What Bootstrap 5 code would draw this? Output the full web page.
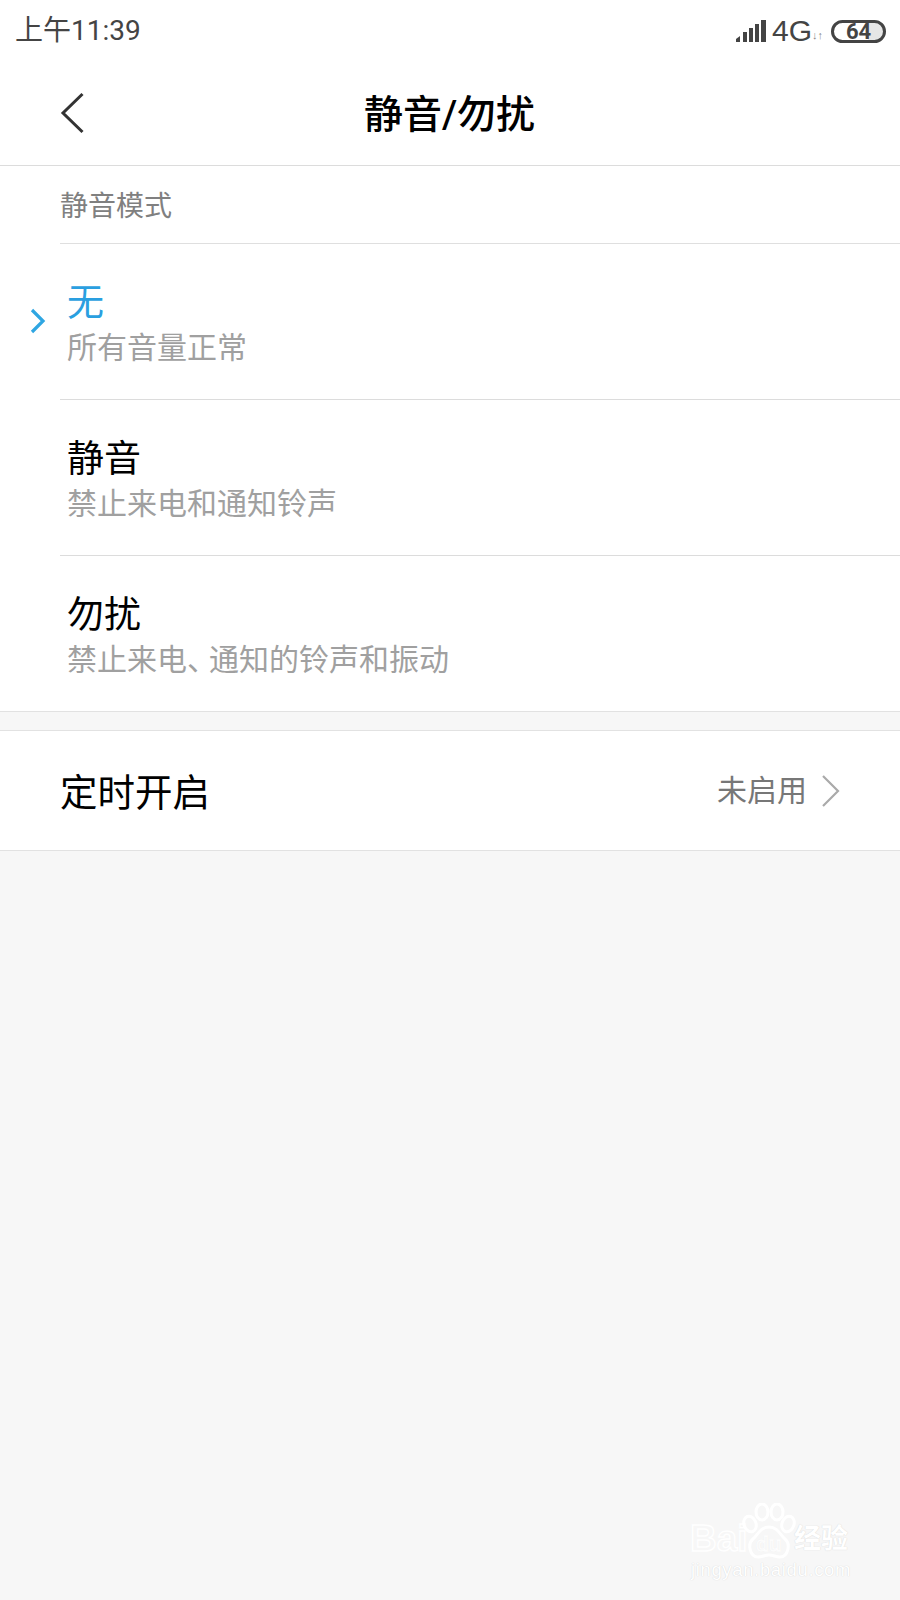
<!DOCTYPE html>
<html lang="zh">
<head>
<meta charset="utf-8">
<title>静音/勿扰</title>
<link href="https://cdn.jsdelivr.net/npm/bootstrap@5.3.0/dist/css/bootstrap.min.css" rel="stylesheet">
<style>
html,body{height:100%}
body{background:#f7f7f7;font-family:"Roboto","Noto Sans CJK SC",sans-serif;color:#000;overflow:hidden}
.screen{height:1600px;width:900px;position:relative}
.hdr{height:166px;background:#fff;border-bottom:1px solid #dcdcdc}
.stat{height:60px;padding:2px 14px 0 15px}
.clock{font-size:28px;line-height:62px;color:#444;letter-spacing:0}
.sig{margin-right:5px}
.net{font-size:30px;line-height:60px;color:#444;font-family:"Liberation Sans",sans-serif}
.arrows{font-size:11px;color:#888;margin:9px 0 0 0;font-family:"Liberation Sans",sans-serif}
.batt{width:55px;height:23px;border:3px solid #444;border-radius:12px;font-size:22px;font-weight:700;line-height:17px;color:#444;text-align:center;background:linear-gradient(90deg,#fff 70%,#e6e6e6 70%);font-family:"Roboto",sans-serif}
.topbar{height:105px;padding-left:60px;position:relative}
.ttl{font-size:39px;font-weight:500;line-height:105px;position:absolute;left:0;right:0;top:3px;padding-right:1px;text-align:center}
.sect{background:#fff;border-bottom:1px solid #e2e2e2}
.lab-row{height:78px;margin-left:60px;border-bottom:1px solid #dfdfdf;font-size:28px;line-height:82px;color:#808080}
.opt{height:156px;margin-left:60px;padding-left:7px;position:relative;border-bottom:1px solid #dcdcdc}
.opt:last-child{border-bottom:0;height:155px}
.opt-t{font-size:37px;line-height:46px;padding-top:37px;box-sizing:content-box}
.opt-s{font-size:30px;line-height:44px;color:#a0a0a0;margin-top:-1px}
.dun{letter-spacing:-8px}
.is-on .opt-t{color:#2a9fe0}
.tick{position:absolute;left:-31px;top:64px}
.timer{margin-top:18px;height:121px;background:#fff;border-top:1px solid #e2e2e2;border-bottom:1px solid #e2e2e2;padding:0 59px 0 60px}
.timer-t{font-size:37.5px;padding-top:6px}
.timer-v{font-size:30px;color:#777;margin-right:14px}
.wm{position:absolute;left:690px;top:1500px;width:165px;height:80px;pointer-events:none}
.wm-a{position:absolute;left:0;top:18px;font:700 37px/42px "Liberation Sans",sans-serif;color:#f7f7f7;-webkit-text-stroke:1.5px #fff;text-shadow:0 0 1px #ddd}
.wm-b{position:absolute;left:104px;top:23px;font-size:27px;line-height:32px;font-weight:700;color:#fff;text-shadow:0 0 1px #ccc;white-space:nowrap}
.wm-c{position:absolute;left:1px;top:59px;font:400 18.6px/22px "Liberation Sans",sans-serif;color:#fff;text-shadow:0 0 1px #ccc;letter-spacing:.6px;white-space:nowrap}
.wm svg{position:absolute;left:52px;top:3px}
.wm-d{position:absolute;left:66px;top:32px;font:700 21px/24px "Liberation Sans",sans-serif;color:#f7f7f7;-webkit-text-stroke:.8px #fff;text-shadow:0 0 1px #ddd}
</style>
</head>
<body>
<div class="screen">
  <div class="hdr">
    <div class="stat d-flex justify-content-between align-items-center">
      <div class="clock">上午11:39</div>
      <div class="d-flex align-items-center">
        <svg width="33" height="24" viewBox="0 0 33 24" class="sig" aria-hidden="true"><g fill="#444"><path d="M2 23v-3l4-3v6z"/><rect x="9" y="13" width="4" height="10"/><rect x="15" y="9" width="4" height="14"/><rect x="21" y="5" width="4" height="18"/><rect x="27" y="1" width="5" height="22"/></g></svg>
        <span class="net">4G</span>
        <span class="arrows">↓↑</span>
        <div class="batt ms-2">64</div>
      </div>
    </div>
    <div class="topbar d-flex align-items-center">
      <svg width="30" height="42" viewBox="0 0 30 42" class="d-block" aria-hidden="true"><path d="M22.500 2 3 21l19.500 19" fill="none" stroke="#333" stroke-width="3"/></svg>
      <div class="ttl">静音/勿扰</div>
    </div>
  </div>
  <div class="sect">
    <div class="lab-row">静音模式</div>
    <div class="opt is-on">
      <svg class="tick" width="18" height="26" viewBox="0 0 18 26" aria-hidden="true"><path d="M3 2l11 11L3 24" fill="none" stroke="#2fa6e2" stroke-width="3.2"/></svg>
      <div class="opt-t">无</div>
      <div class="opt-s">所有音量正常</div>
    </div>
    <div class="opt">
      <div class="opt-t">静音</div>
      <div class="opt-s">禁止来电和通知铃声</div>
    </div>
    <div class="opt">
      <div class="opt-t">勿扰</div>
      <div class="opt-s">禁止来电<span class="dun">、</span>通知的铃声和振动</div>
    </div>
  </div>
  <div class="timer d-flex justify-content-between align-items-center">
    <div class="timer-t">定时开启</div>
    <div class="d-flex align-items-center">
      <span class="timer-v">未启用</span>
      <svg width="20" height="34" viewBox="0 0 20 34" aria-hidden="true"><path d="M2 2l15 15L2 32" fill="none" stroke="#aaa" stroke-width="2.2"/></svg>
    </div>
  </div>
  <div class="wm">
    <div class="wm-a">Bai</div>
    <svg width="54" height="56" viewBox="0 0 54 56" aria-hidden="true"><g fill="none" stroke="#fff" stroke-width="3"><ellipse cx="8" cy="21" rx="6" ry="8" transform="rotate(-20 8 21)"/><ellipse cx="20" cy="9" rx="6" ry="8"/><ellipse cx="35" cy="9" rx="6" ry="8"/><ellipse cx="46" cy="21" rx="6" ry="8" transform="rotate(20 46 21)"/><path d="M27 24c9 0 11 8 16 12 6 5 3 18-5 18-4 0-7-2-11-2s-7 2-11 2c-8 0-11-13-5-18 5-4 7-12 16-12z"/></g></svg>
    <div class="wm-d">du</div>
    <div class="wm-b">经验</div>
    <div class="wm-c">jingyan.baidu.com</div>
  </div>
</div>
</body>
</html>
